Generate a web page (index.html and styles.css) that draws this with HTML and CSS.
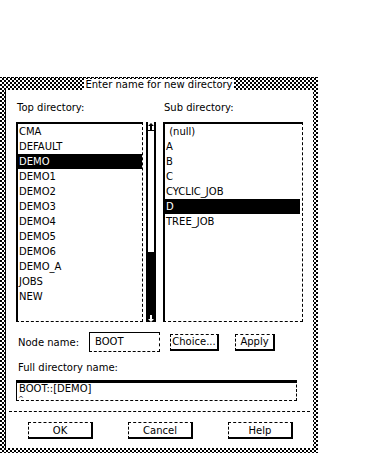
FILE: index.html
```html
<!DOCTYPE html>
<html lang="en">
<head>
<meta charset="UTF-8">
<title>Enter name for new directory</title>
<link rel="stylesheet" href="styles.css">
</head>
<body>
<div class="dialog">
    <div class="titlebar"><span>Enter name for new directory</span></div>
    <div class="panel">
        <div class="lists">
            <div class="col top-col">
                <div class="label">Top directory:</div>
                <div class="pane">
                    <ul class="listbox">
                        <li>CMA</li>
                        <li>DEFAULT</li>
                        <li class="selected">DEMO</li>
                        <li>DEMO1</li>
                        <li>DEMO2</li>
                        <li>DEMO3</li>
                        <li>DEMO4</li>
                        <li>DEMO5</li>
                        <li>DEMO6</li>
                        <li>DEMO_A</li>
                        <li>JOBS</li>
                        <li>NEW</li>
                    </ul>
                    <div class="scrollbar">
                        <div class="arrow">
                            <svg width="6" height="7" viewBox="0 0 6 7"><path d="M3 0 L6 3 L4 3 L4 7 L2 7 L2 3 L0 3 Z" fill="#000"/></svg>
                        </div>
                        <div class="trough"></div>
                        <div class="thumb"></div>
                        <div class="arrow down">
                            <svg width="6" height="7" viewBox="0 0 6 7"><path d="M3 7 L6 4 L4 4 L4 0 L2 0 L2 4 L0 4 Z" fill="#fff"/></svg>
                        </div>
                    </div>
                </div>
            </div>
            <div class="col sub-col">
                <div class="label">Sub directory:</div>
                <ul class="listbox">
                    <li>&nbsp;(null)</li>
                    <li>A</li>
                    <li>B</li>
                    <li>C</li>
                    <li>CYCLIC_JOB</li>
                    <li class="selected">D</li>
                    <li>TREE_JOB</li>
                </ul>
            </div>
        </div>

        <div class="node-row">
            <span class="node-label">Node name:</span>
            <div class="field node-field">BOOT</div>
            <button class="btn choice">Choice...</button>
            <button class="btn apply">Apply</button>
        </div>

        <div class="label full-label">Full directory name:</div>
        <div class="field full-field"><span class="full-text">BOOT::[DEMO]</span><span class="caret">^</span></div>

        <div class="actions">
            <button class="btn big">OK</button>
            <button class="btn big">Cancel</button>
            <button class="btn big">Help</button>
        </div>
    </div>
</div>
</body>
</html>
```

FILE: styles.css
```css
* {
    box-sizing: border-box;
}
body {
    margin: 0;
    padding-top: 77px;
    background: #fff;
    color: #000;
    font-family: "DejaVu Sans", sans-serif;
    font-size: 10px;
}
ul {
    list-style: none;
    margin: 0;
    padding: 0;
}
button {
    font-family: "DejaVu Sans", sans-serif;
    font-size: 10px;
    color: #000;
    background: #fff;
    padding: 0;
    cursor: pointer;
}

/* window frame */
.dialog {
    width: 318px;
    padding: 0 5px 5px;
    border-top: 1px dotted #000;
    background: repeating-conic-gradient(#000 0 25%, #fff 0 50%) 0 0 / 4px 4px;
}
.titlebar {
    height: 12px;
    padding-top: 1px;
    text-align: center;
    line-height: 11px;
    font-size: 10px;
}
.titlebar span {
    background: #fff;
    padding: 0 1px;
}
.panel {
    background: #fff;
    height: 358px;
    padding: 12px 10px 0;
    border-left: 1px solid #000;
}

/* lists */
.lists {
    display: flex;
    gap: 6px;
}
.col {
    display: flex;
    flex-direction: column;
    gap: 8px;
}
.top-col {
    width: 142px;
}
.sub-col {
    width: 141px;
}
.label {
    height: 12px;
    line-height: 12px;
    padding-left: 1px;
}
.pane {
    display: flex;
    height: 200px;
}
.listbox {
    height: 200px;
    flex: 1;
    border-top: 2px solid #000;
    border-left: 2px solid #000;
    border-right: 1px dashed #000;
    border-bottom: 1px dashed #000;
}
.listbox li {
    height: 15px;
    line-height: 15px;
    padding-left: 1px;
    white-space: pre;
}
.listbox li.selected {
    background: #000;
    color: #fff;
}
.sub-col .listbox li.selected {
    margin-right: 2px;
}
.scrollbar {
    width: 10px;
    margin-left: 3px;
    margin-right: 1px;
    display: flex;
    flex-direction: column;
    border-left: 2px solid #000;
    border-right: 2px solid #000;
}
.arrow {
    height: 8px;
    display: flex;
    justify-content: center;
    align-items: center;
}
.arrow.down {
    background: #000;
}
.trough {
    height: 122px;
    border-top: 1px solid #000;
}
.thumb {
    flex: 1;
    background: #000;
}

/* node name row */
.node-row {
    display: flex;
    align-items: center;
    height: 20px;
    margin-top: 10px;
}
.node-label {
    width: 73px;
    padding-left: 2px;
}
.field {
    border-top: 1px solid #000;
    border-left: 1px solid #000;
    border-right: 1px dashed #000;
    border-bottom: 1px dashed #000;
}
.node-field {
    width: 71px;
    height: 20px;
    line-height: 18px;
    padding-left: 5px;
}
.btn {
    height: 17px;
    border-top: 1px dashed #000;
    border-left: 1px dashed #000;
    border-right: 2px solid #000;
    border-bottom: 2px solid #000;
}
.choice {
    width: 49px;
    margin-left: 10px;
}
.apply {
    width: 40px;
    margin-left: 16px;
}

/* full directory name */
.full-label {
    margin-top: 10px;
    padding-left: 2px;
}
.full-field {
    position: relative;
    width: 281px;
    height: 21px;
    margin-top: 6px;
    border-top: 3px solid #000;
    padding-left: 2px;
}
.full-text {
    display: block;
    height: 12px;
    line-height: 12px;
    margin-top: 0;
}
.caret {
    position: absolute;
    left: 1px;
    top: 14px;
    font-size: 7px;
    line-height: 4px;
}

/* bottom buttons */
.actions {
    display: flex;
    gap: 35px;
    margin: 10px -7px 0;
    padding: 10px 0 0 19px;
    border-top: 1px dashed #000;
}
.big {
    width: 65px;
}
```
